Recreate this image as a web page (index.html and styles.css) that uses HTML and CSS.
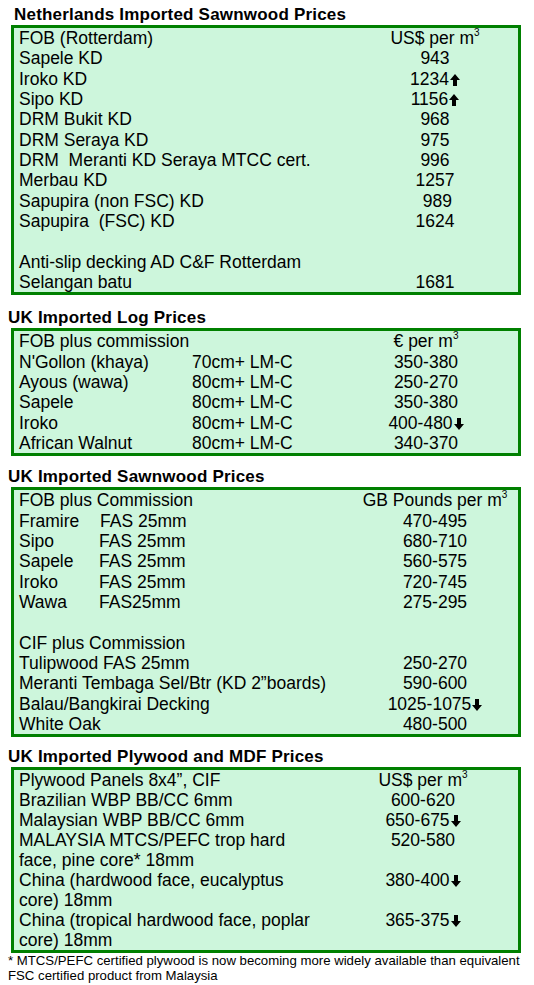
FILE: index.html
```html
<!DOCTYPE html>
<html>
<head>
<meta charset="utf-8">
<link rel="stylesheet" href="styles.css">
</head>
<body>
<section class="sec sec-nl">
  <h2 class="title title-nl">Netherlands Imported Sawnwood Prices</h2>
  <div class="box box-nl">
    <div class="name">FOB (Rotterdam)</div><div class="val">US$ per m<sup>3</sup></div>
    <div class="name">Sapele KD</div><div class="val">943</div>
    <div class="name">Iroko KD</div><div class="val">1234<svg class="arr" viewBox="0 0 10 12"><path d="M5 0L10 6H7V12H3V6H0Z"/></svg></div>
    <div class="name">Sipo KD</div><div class="val">1156<svg class="arr" viewBox="0 0 10 12"><path d="M5 0L10 6H7V12H3V6H0Z"/></svg></div>
    <div class="name">DRM Bukit KD</div><div class="val">968</div>
    <div class="name">DRM Seraya KD</div><div class="val">975</div>
    <div class="name">DRM&nbsp; Meranti KD Seraya MTCC cert.</div><div class="val">996</div>
    <div class="name">Merbau KD</div><div class="val">1257</div>
    <div class="name">Sapupira (non FSC) KD</div><div class="val">&nbsp;989</div>
    <div class="name">Sapupira&nbsp; (FSC) KD</div><div class="val">1624</div>
    <div class="name">&nbsp;</div><div class="val"></div>
    <div class="name">Anti-slip decking AD C&amp;F Rotterdam</div><div class="val"></div>
    <div class="name">Selangan batu</div><div class="val">1681</div>
  </div>
</section>

<section class="sec sec-log">
  <h2 class="title">UK Imported Log Prices</h2>
  <div class="box box-log">
    <div class="name span2">FOB plus commission</div><div class="val">€ per m<sup>3</sup></div>
    <div class="name">N'Gollon (khaya)</div><div class="grade">70cm+ LM-C</div><div class="val">350-380</div>
    <div class="name">Ayous (wawa)</div><div class="grade">80cm+ LM-C</div><div class="val">250-270</div>
    <div class="name">Sapele</div><div class="grade">80cm+ LM-C</div><div class="val">350-380</div>
    <div class="name">Iroko</div><div class="grade">80cm+ LM-C</div><div class="val">400-480<svg class="arr" viewBox="0 0 10 12"><path d="M5 12L10 6H7V0H3V6H0Z"/></svg></div>
    <div class="name">African Walnut</div><div class="grade">80cm+ LM-C</div><div class="val">340-370</div>
  </div>
</section>

<section class="sec sec-saw">
  <h2 class="title">UK Imported Sawnwood Prices</h2>
  <div class="box box-saw">
    <div class="name span2">FOB plus Commission</div><div class="val val-wide">GB Pounds per m<sup>3</sup></div>
    <div class="name">Framire</div><div class="grade g1">FAS 25mm</div><div class="val">470-495</div>
    <div class="name">Sipo</div><div class="grade">FAS 25mm</div><div class="val">680-710</div>
    <div class="name">Sapele</div><div class="grade">FAS 25mm</div><div class="val">560-575</div>
    <div class="name">Iroko</div><div class="grade">FAS 25mm</div><div class="val">720-745</div>
    <div class="name">Wawa</div><div class="grade">FAS25mm</div><div class="val">275-295</div>
    <div class="name span2">&nbsp;</div><div class="val"></div>
    <div class="name span2">CIF plus Commission</div><div class="val"></div>
    <div class="name span2">Tulipwood FAS 25mm</div><div class="val">250-270</div>
    <div class="name span2">Meranti Tembaga Sel/Btr (KD 2”boards)</div><div class="val">590-600</div>
    <div class="name span2">Balau/Bangkirai Decking</div><div class="val">1025-1075<svg class="arr" viewBox="0 0 10 12"><path d="M5 12L10 6H7V0H3V6H0Z"/></svg></div>
    <div class="name span2">White Oak</div><div class="val">480-500</div>
  </div>
</section>

<section class="sec sec-ply">
  <h2 class="title">UK Imported Plywood and MDF Prices</h2>
  <div class="box box-ply">
    <div class="name">Plywood Panels 8x4”, CIF</div><div class="val">US$ per m<sup>3</sup></div>
    <div class="name">Brazilian WBP BB/CC 6mm</div><div class="val">600-620</div>
    <div class="name">Malaysian WBP BB/CC 6mm</div><div class="val">650-675<svg class="arr" viewBox="0 0 10 12"><path d="M5 12L10 6H7V0H3V6H0Z"/></svg></div>
    <div class="name">MALAYSIA MTCS/PEFC trop hard<br>face, pine core* 18mm</div><div class="val">520-580</div>
    <div class="name">China (hardwood face, eucalyptus<br>core) 18mm</div><div class="val">380-400<svg class="arr" viewBox="0 0 10 12"><path d="M5 12L10 6H7V0H3V6H0Z"/></svg></div>
    <div class="name">China (tropical hardwood face, poplar<br>core) 18mm</div><div class="val">365-375<svg class="arr" viewBox="0 0 10 12"><path d="M5 12L10 6H7V0H3V6H0Z"/></svg></div>
  </div>
  <p class="note">* MTCS/PEFC certified plywood is now becoming more widely available than equivalent FSC certified product from Malaysia</p>
</section>
</body>
</html>
```

FILE: styles.css
```css
html, body {
  margin: 0;
  padding: 0;
  background: #ffffff;
}

body {
  font-family: "Liberation Sans", Arial, sans-serif;
  color: #000;
  width: 534px;
}

.sec {
  margin: 0;
}

.title {
  margin: 0;
  padding-left: 8px;
  font-size: 17px;
  font-weight: bold;
  letter-spacing: 0.2px;
  line-height: 20px;
  height: 20px;
}

.title-nl {
  padding-left: 14px;
}

.sec-nl {
  padding-top: 5px;
}

.sec-log {
  margin-top: 13px;
}

.sec-saw {
  margin-top: 11px;
}

.sec-ply {
  margin-top: 10px;
}

.box {
  margin-left: 11px;
  border: 3px solid #008000;
  background: #cdf6dc;
  display: grid;
  font-size: 17.5px;
  line-height: 20.33px;
  padding-left: 5px;
}

.box-nl {
  grid-template-columns: 1fr 140px;
  padding-right: 13px;
  width: 486px;
}

.box-log {
  grid-template-columns: 173px 1fr 140px;
  padding-right: 22px;
  width: 477px;
}

.box-saw {
  grid-template-columns: 80px 1fr 140px;
  padding-right: 13px;
  width: 486px;
}

.box-ply {
  grid-template-columns: 1fr 140px;
  padding-right: 25px;
  width: 474px;
  line-height: 20px;
}

.name {
  white-space: nowrap;
}

.span2 {
  grid-column: 1 / 3;
}

.grade {
  white-space: nowrap;
}

.g1 {
  padding-left: 1px;
}

.val {
  text-align: center;
  white-space: nowrap;
}

.val-wide {
  margin: 0 -20px;
}

.val sup {
  font-size: 10px;
  line-height: 0;
  vertical-align: 8px;
}

.arr {
  width: 10px;
  height: 12px;
  margin-left: 1px;
  vertical-align: -1px;
  fill: #000;
}

.note {
  margin: 0;
  padding-left: 8px;
  padding-right: 10px;
  font-size: 13.2px;
  line-height: 15px;
}
```
